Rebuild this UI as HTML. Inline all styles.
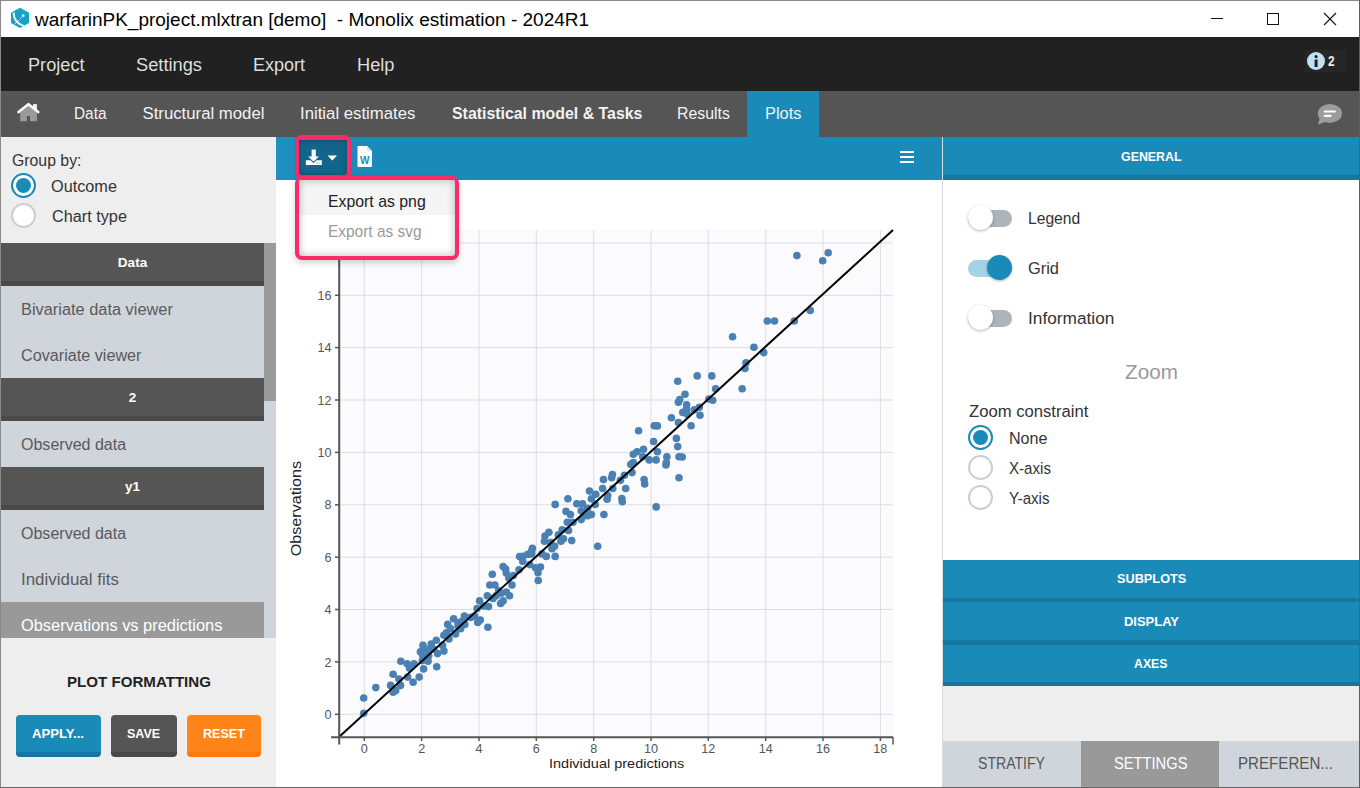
<!DOCTYPE html>
<html><head><meta charset="utf-8"><style>
html,body{margin:0;padding:0;width:1360px;height:788px;overflow:hidden;background:#eee}
body{position:relative;font-family:"Liberation Sans",sans-serif}
.r{position:absolute;box-sizing:content-box}
.t{position:absolute;white-space:nowrap}
</style></head><body>
<div class="r" style="left:0px;top:0px;width:1360px;height:788px;background:#eeeeee;"></div>
<div class="r" style="left:0px;top:0px;width:1360px;height:37px;background:#ffffff;"></div>
<div class="r" style="left:0px;top:0px;width:1360px;height:1px;background:#8a8a8a;"></div>
<div class="r" style="left:0px;top:0px;width:1px;height:788px;background:#8a8a8a;"></div>
<svg class="r" style="left:5px;top:3px" width="30" height="30"><polygon points="15,4.8 24,9.7 24,20 15,25.1 6,20 6,9.7" fill="#12a3c7"/><path d="M7.6,9.8 L9.6,9.6 Q9.4,19 19.6,22.6 L18.2,23.4 Q8.2,21 7.6,9.8 Z" fill="#fff"/><rect x="17" y="11.5" width="2.4" height="2.2" fill="#fff"/><path d="M10.2,20.8 L16.8,14.2" stroke="#fff" stroke-width="0.9" stroke-dasharray="1.2,0.9"/></svg>
<div class="t" style="left:35.30px;top:11.01px;font-size:18.58px;line-height:18.58px;color:#000;transform:scaleX(1.0221);transform-origin:left center;">warfarinPK_project.mlxtran [demo]&nbsp; - Monolix estimation - 2024R1</div>
<div class="r" style="left:1211px;top:18px;width:12px;height:1px;background:#111;"></div>
<div class="r" style="left:1267px;top:13px;width:10px;height:10px;border:1px solid #111"></div>
<svg class="r" style="left:1323px;top:12px" width="14" height="14"><path d="M1,1 L13,13 M13,1 L1,13" stroke="#111" stroke-width="1.1"/></svg>
<div class="r" style="left:1px;top:37px;width:1358px;height:54px;background:#212121;"></div>
<div class="t" style="left:27.50px;top:56.01px;font-size:18.58px;line-height:18.58px;color:#dedede;transform:scaleX(0.9773);transform-origin:left center;">Project</div>
<div class="t" style="left:135.50px;top:56.01px;font-size:18.58px;line-height:18.58px;color:#dedede;transform:scaleX(0.9833);transform-origin:left center;">Settings</div>
<div class="t" style="left:253.00px;top:56.01px;font-size:18.58px;line-height:18.58px;color:#dedede;transform:scaleX(0.9686);transform-origin:left center;">Export</div>
<div class="t" style="left:356.50px;top:56.01px;font-size:18.58px;line-height:18.58px;color:#dedede;transform:scaleX(0.9816);transform-origin:left center;">Help</div>
<div class="r" style="left:1305px;top:50px;width:41px;height:22px;background:#262626;"></div>
<svg class="r" style="left:1307px;top:52px" width="19" height="19"><circle cx="9" cy="9" r="9" fill="#bfe1f2"/><rect x="7.6" y="7.5" width="3" height="7.5" fill="#222"/><circle cx="9.1" cy="4.6" r="1.6" fill="#222"/></svg>
<div class="t" style="left:1327.60px;top:55.01px;font-size:13.97px;line-height:13.97px;color:#e8e8e8;font-weight:bold;transform:scaleX(0.8497);transform-origin:left center;">2</div>
<div class="r" style="left:1px;top:91px;width:1358px;height:46px;background:#555555;"></div>
<div class="r" style="left:747px;top:91px;width:72px;height:46px;background:#1a8bb9;"></div>
<svg class="r" style="left:10px;top:95px" width="40" height="35"><path d="M10.2,17.5 L18.4,10.8 L26.9,17.5 L26.9,26.2 L20,26.2 L20,21.1 L16.9,21.1 L16.9,26.2 L10.2,26.2 Z" fill="#9a9a9a"/><rect x="23.1" y="9.1" width="3.8" height="5" fill="#f4f4f4"/><path d="M8.6,17.1 L18.4,9.2 L28.2,17.1" stroke="#fff" stroke-width="2.6" fill="none" stroke-linecap="round" stroke-linejoin="round"/></svg>
<div class="t" style="left:73.50px;top:106.02px;font-size:16.76px;line-height:16.76px;color:#f2f2f2;transform:scaleX(0.9180);transform-origin:left center;">Data</div>
<div class="t" style="left:142.50px;top:106.02px;font-size:16.76px;line-height:16.76px;color:#f2f2f2;">Structural model</div>
<div class="t" style="left:300.00px;top:106.02px;font-size:16.76px;line-height:16.76px;color:#f2f2f2;">Initial estimates</div>
<div class="t" style="left:451.50px;top:106.02px;font-size:16.76px;line-height:16.76px;color:#f2f2f2;font-weight:bold;transform:scaleX(0.9483);transform-origin:left center;">Statistical model &amp; Tasks</div>
<div class="t" style="left:677.00px;top:106.02px;font-size:16.76px;line-height:16.76px;color:#f2f2f2;transform:scaleX(0.9484);transform-origin:left center;">Results</div>
<div class="t" style="left:765.00px;top:106.02px;font-size:16.76px;line-height:16.76px;color:#f2f2f2;transform:scaleX(0.9796);transform-origin:left center;">Plots</div>
<svg class="r" style="left:1300px;top:95px" width="60" height="40"><ellipse cx="29.9" cy="18.4" rx="12.1" ry="9.5" fill="#9c9c9c"/><path d="M20,22 L18,29.8 L27,26 Z" fill="#9c9c9c"/><rect x="23.6" y="15.4" width="12.4" height="2.2" rx="1" fill="#fff"/><rect x="23.6" y="19.7" width="8" height="2.2" rx="1" fill="#fff"/></svg>
<div class="r" style="left:1px;top:137px;width:275px;height:651px;background:#eeeeee;"></div>
<div class="t" style="left:11.50px;top:152.01px;font-size:16.48px;line-height:16.48px;color:#333;transform:scaleX(0.9604);transform-origin:left center;">Group by:</div>
<div class="r" style="left:11.0px;top:173.0px;width:20.8px;height:20.8px;border:2.1px solid #1a8bb9;border-radius:50%;background:#fff"></div><div class="r" style="left:16.0px;top:178.0px;width:15px;height:15px;border-radius:50%;background:#1a8bb9"></div>
<div class="t" style="left:51.40px;top:179.01px;font-size:15.78px;line-height:15.78px;color:#333;transform:scaleX(1.0308);transform-origin:left center;">Outcome</div>
<div class="r" style="left:11.0px;top:203.1px;width:21px;height:21px;border:2px solid #c9ced6;border-radius:50%;background:#fff"></div>
<div class="t" style="left:52.00px;top:209.01px;font-size:15.78px;line-height:15.78px;color:#333;transform:scaleX(1.0301);transform-origin:left center;">Chart type</div>
<div class="r" style="left:1px;top:243px;width:263px;height:395px;background:#d0d5dc;"></div>
<div class="r" style="left:264px;top:243px;width:12px;height:395px;background:#d0d5dc;"></div>
<div class="r" style="left:264px;top:243px;width:12px;height:158px;background:#9a9a9a;"></div>
<div class="r" style="left:1px;top:243px;width:263px;height:38px;background:#555555;"></div><div class="r" style="left:1px;top:281px;width:263px;height:5px;background:#4a4a4a;"></div><div class="t" style="left:117.82px;top:256.02px;font-size:13.55px;line-height:13.55px;color:#fff;font-weight:bold;">Data</div>
<div class="t" style="left:21.40px;top:302.02px;font-size:15.78px;line-height:15.78px;color:#5a5a5a;transform:scaleX(1.0376);transform-origin:left center;">Bivariate data viewer</div>
<div class="t" style="left:21.40px;top:348.02px;font-size:15.78px;line-height:15.78px;color:#5a5a5a;transform:scaleX(1.0261);transform-origin:left center;">Covariate viewer</div>
<div class="r" style="left:1px;top:378px;width:263px;height:38px;background:#555555;"></div><div class="r" style="left:1px;top:416px;width:263px;height:5px;background:#4a4a4a;"></div><div class="t" style="left:128.73px;top:391.02px;font-size:13.55px;line-height:13.55px;color:#fff;font-weight:bold;">2</div>
<div class="t" style="left:21.40px;top:437.02px;font-size:15.78px;line-height:15.78px;color:#5a5a5a;transform:scaleX(1.0162);transform-origin:left center;">Observed data</div>
<div class="r" style="left:1px;top:467px;width:263px;height:38px;background:#555555;"></div><div class="r" style="left:1px;top:505px;width:263px;height:5px;background:#4a4a4a;"></div><div class="t" style="left:124.97px;top:480.02px;font-size:13.55px;line-height:13.55px;color:#fff;font-weight:bold;">y1</div>
<div class="t" style="left:21.40px;top:526.02px;font-size:15.78px;line-height:15.78px;color:#5a5a5a;transform:scaleX(1.0162);transform-origin:left center;">Observed data</div>
<div class="t" style="left:21.40px;top:572.02px;font-size:15.78px;line-height:15.78px;color:#5a5a5a;transform:scaleX(1.0742);transform-origin:left center;">Individual fits</div>
<div class="r" style="left:1px;top:602px;width:263px;height:36px;background:#999999;"></div>
<div class="t" style="left:21.40px;top:618.02px;font-size:15.78px;line-height:15.78px;color:#fff;transform:scaleX(1.0399);transform-origin:left center;">Observations vs predictions</div>
<div class="t" style="left:66.60px;top:674.00px;font-size:15.36px;line-height:15.36px;color:#222;font-weight:bold;transform:scaleX(0.9829);transform-origin:left center;">PLOT FORMATTING</div>
<div class="r" style="left:16px;top:715px;width:85px;height:42px;border-radius:4px;background:linear-gradient(#1a8bb9 0,#1a8bb9 37px,#15779f 37px)"></div><div class="t" style="left:32.20px;top:727.01px;font-size:13.69px;line-height:13.69px;color:#fff;font-weight:bold;transform:scaleX(0.9564);transform-origin:left center;">APPLY...</div>
<div class="r" style="left:111px;top:715px;width:66px;height:42px;border-radius:4px;background:linear-gradient(#555555 0,#555555 37px,#484848 37px)"></div><div class="t" style="left:127.20px;top:727.01px;font-size:13.69px;line-height:13.69px;color:#fff;font-weight:bold;transform:scaleX(0.9129);transform-origin:left center;">SAVE</div>
<div class="r" style="left:187px;top:715px;width:74px;height:42px;border-radius:4px;background:linear-gradient(#ff851b 0,#ff851b 37px,#ff7a0a 37px)"></div><div class="t" style="left:203.00px;top:727.01px;font-size:13.69px;line-height:13.69px;color:#fff;font-weight:bold;transform:scaleX(0.9160);transform-origin:left center;">RESET</div>
<div class="r" style="left:942px;top:137px;width:1px;height:651px;background:#d6dbe1;"></div>
<div class="r" style="left:943px;top:180px;width:416px;height:561px;background:#ffffff;"></div>
<div class="r" style="left:943px;top:137px;width:416px;height:38px;background:#1a8bb9;"></div><div class="r" style="left:943px;top:175px;width:416px;height:5px;background:#15779f;"></div>
<div class="t" style="left:1120.70px;top:150.00px;font-size:13.27px;line-height:13.27px;color:#fff;font-weight:bold;transform:scaleX(0.9341);transform-origin:left center;">GENERAL</div>
<div class="r" style="left:968px;top:210.1px;width:44px;height:16.7px;border-radius:8.3px;background:#aeb4bb"></div><div class="r" style="left:967.9px;top:205.0px;width:25px;height:25px;border-radius:50%;background:#fff;box-shadow:0 1px 3px rgba(0,0,0,0.3)"></div>
<div class="t" style="left:1027.80px;top:211.01px;font-size:15.92px;line-height:15.92px;color:#333;transform:scaleX(0.9825);transform-origin:left center;">Legend</div>
<div class="r" style="left:968px;top:260.0px;width:44px;height:16.7px;border-radius:8.3px;background:#a3d3e6"></div><div class="r" style="left:987.2px;top:254.9px;width:25px;height:25px;border-radius:50%;background:#1a8bb9;box-shadow:0 1px 3px rgba(0,0,0,0.3)"></div>
<div class="t" style="left:1027.80px;top:261.00px;font-size:15.92px;line-height:15.92px;color:#333;transform:scaleX(1.0306);transform-origin:left center;">Grid</div>
<div class="r" style="left:968px;top:310.0px;width:44px;height:16.7px;border-radius:8.3px;background:#aeb4bb"></div><div class="r" style="left:967.9px;top:304.9px;width:25px;height:25px;border-radius:50%;background:#fff;box-shadow:0 1px 3px rgba(0,0,0,0.3)"></div>
<div class="t" style="left:1027.80px;top:311.00px;font-size:15.92px;line-height:15.92px;color:#333;transform:scaleX(1.0860);transform-origin:left center;">Information</div>
<div class="t" style="left:1124.50px;top:362.01px;font-size:20.53px;line-height:20.53px;color:#999;transform:scaleX(1.0080);transform-origin:left center;">Zoom</div>
<div class="t" style="left:968.50px;top:404.02px;font-size:15.92px;line-height:15.92px;color:#333;transform:scaleX(1.0468);transform-origin:left center;">Zoom constraint</div>
<div class="r" style="left:968.0px;top:425.4px;width:20.8px;height:20.8px;border:2.1px solid #1a8bb9;border-radius:50%;background:#fff"></div><div class="r" style="left:973.0px;top:430.4px;width:15px;height:15px;border-radius:50%;background:#1a8bb9"></div>
<div class="t" style="left:1008.60px;top:431.01px;font-size:15.92px;line-height:15.92px;color:#333;transform:scaleX(1.0114);transform-origin:left center;">None</div>
<div class="r" style="left:968.0px;top:455.2px;width:21px;height:21px;border:2px solid #c9ced6;border-radius:50%;background:#fff"></div>
<div class="t" style="left:1008.60px;top:461.01px;font-size:15.92px;line-height:15.92px;color:#333;transform:scaleX(0.9494);transform-origin:left center;">X-axis</div>
<div class="r" style="left:968.0px;top:485.0px;width:21px;height:21px;border:2px solid #c9ced6;border-radius:50%;background:#fff"></div>
<div class="t" style="left:1008.60px;top:491.02px;font-size:15.92px;line-height:15.92px;color:#333;transform:scaleX(0.9468);transform-origin:left center;">Y-axis</div>
<div class="r" style="left:943px;top:560px;width:416px;height:37.5px;background:#1a8bb9;"></div><div class="r" style="left:943px;top:597.5px;width:416px;height:4.0px;background:#15779f;"></div>
<div class="r" style="left:943px;top:601.5px;width:416px;height:38.5px;background:#1a8bb9;"></div><div class="r" style="left:943px;top:640.0px;width:416px;height:4.5px;background:#15779f;"></div>
<div class="r" style="left:943px;top:644.5px;width:416px;height:37.0px;background:#1a8bb9;"></div><div class="r" style="left:943px;top:681.5px;width:416px;height:5.0px;background:#15779f;"></div>
<div class="t" style="left:1116.50px;top:572.00px;font-size:13.27px;line-height:13.27px;color:#fff;font-weight:bold;transform:scaleX(0.9592);transform-origin:left center;">SUBPLOTS</div>
<div class="t" style="left:1123.90px;top:615.00px;font-size:13.27px;line-height:13.27px;color:#fff;font-weight:bold;transform:scaleX(0.9771);transform-origin:left center;">DISPLAY</div>
<div class="t" style="left:1134.20px;top:657.00px;font-size:13.27px;line-height:13.27px;color:#fff;font-weight:bold;transform:scaleX(0.9271);transform-origin:left center;">AXES</div>
<div class="r" style="left:943px;top:686px;width:416px;height:55px;background:#eeeeee;"></div>
<div class="r" style="left:943px;top:741px;width:138px;height:46px;background:#d0d5dc;"></div>
<div class="r" style="left:1081px;top:741px;width:138px;height:46px;background:#999999;"></div>
<div class="r" style="left:1219px;top:741px;width:140px;height:46px;background:#d0d5dc;"></div>
<div class="t" style="left:977.80px;top:756.02px;font-size:16.62px;line-height:16.62px;color:#555;transform:scaleX(0.8470);transform-origin:left center;">STRATIFY</div>
<div class="t" style="left:1114.00px;top:756.02px;font-size:16.62px;line-height:16.62px;color:#fff;transform:scaleX(0.8844);transform-origin:left center;">SETTINGS</div>
<div class="t" style="left:1237.50px;top:756.02px;font-size:16.62px;line-height:16.62px;color:#555;transform:scaleX(0.9103);transform-origin:left center;">PREFEREN...</div>
<div class="r" style="left:276px;top:137px;width:666px;height:43px;background:#1a8bb9;"></div>
<div class="r" style="left:276px;top:180px;width:666px;height:607px;background:#ffffff;"></div>
<svg class="r" style="left:0;top:0" width="1360" height="788"><rect x="340" y="230" width="553" height="507" fill="#fbfbfd"/><line x1="364.3" y1="230" x2="364.3" y2="737" stroke="#dcdde1" stroke-width="1"/><line x1="340" y1="714.3" x2="893" y2="714.3" stroke="#dcdde1" stroke-width="1"/><line x1="421.6" y1="230" x2="421.6" y2="737" stroke="#dcdde1" stroke-width="1"/><line x1="340" y1="661.9" x2="893" y2="661.9" stroke="#dcdde1" stroke-width="1"/><line x1="479.0" y1="230" x2="479.0" y2="737" stroke="#dcdde1" stroke-width="1"/><line x1="340" y1="609.5" x2="893" y2="609.5" stroke="#dcdde1" stroke-width="1"/><line x1="536.3" y1="230" x2="536.3" y2="737" stroke="#dcdde1" stroke-width="1"/><line x1="340" y1="557.2" x2="893" y2="557.2" stroke="#dcdde1" stroke-width="1"/><line x1="593.7" y1="230" x2="593.7" y2="737" stroke="#dcdde1" stroke-width="1"/><line x1="340" y1="504.8" x2="893" y2="504.8" stroke="#dcdde1" stroke-width="1"/><line x1="651.0" y1="230" x2="651.0" y2="737" stroke="#dcdde1" stroke-width="1"/><line x1="340" y1="452.4" x2="893" y2="452.4" stroke="#dcdde1" stroke-width="1"/><line x1="708.3" y1="230" x2="708.3" y2="737" stroke="#dcdde1" stroke-width="1"/><line x1="340" y1="400.0" x2="893" y2="400.0" stroke="#dcdde1" stroke-width="1"/><line x1="765.7" y1="230" x2="765.7" y2="737" stroke="#dcdde1" stroke-width="1"/><line x1="340" y1="347.6" x2="893" y2="347.6" stroke="#dcdde1" stroke-width="1"/><line x1="823.0" y1="230" x2="823.0" y2="737" stroke="#dcdde1" stroke-width="1"/><line x1="340" y1="295.3" x2="893" y2="295.3" stroke="#dcdde1" stroke-width="1"/><line x1="880.4" y1="230" x2="880.4" y2="737" stroke="#dcdde1" stroke-width="1"/><line x1="340" y1="242.9" x2="893" y2="242.9" stroke="#dcdde1" stroke-width="1"/><g fill="#4a80b2"><circle cx="363.7" cy="713.3" r="3.8"/><circle cx="363.7" cy="698.0" r="3.8"/><circle cx="375.8" cy="687.6" r="3.8"/><circle cx="390.6" cy="685.4" r="3.8"/><circle cx="393.1" cy="692.3" r="3.8"/><circle cx="395.7" cy="690.4" r="3.8"/><circle cx="393.1" cy="674.3" r="3.8"/><circle cx="398.9" cy="679.0" r="3.8"/><circle cx="400.5" cy="685.4" r="3.8"/><circle cx="407.7" cy="677.1" r="3.8"/><circle cx="413.1" cy="682.2" r="3.8"/><circle cx="419.2" cy="677.1" r="3.8"/><circle cx="400.8" cy="661.2" r="3.8"/><circle cx="407.1" cy="663.8" r="3.8"/><circle cx="409.6" cy="668.2" r="3.8"/><circle cx="414.1" cy="663.8" r="3.8"/><circle cx="423.6" cy="668.9" r="3.8"/><circle cx="436.7" cy="666.7" r="3.8"/><circle cx="428.0" cy="661.2" r="3.8"/><circle cx="422.3" cy="660.6" r="3.8"/><circle cx="420.4" cy="651.7" r="3.8"/><circle cx="423.0" cy="645.4" r="3.8"/><circle cx="423.6" cy="650.5" r="3.8"/><circle cx="426.1" cy="653.0" r="3.8"/><circle cx="431.2" cy="644.1" r="3.8"/><circle cx="436.3" cy="640.3" r="3.8"/><circle cx="437.6" cy="653.6" r="3.8"/><circle cx="433.8" cy="649.2" r="3.8"/><circle cx="443.9" cy="651.1" r="3.8"/><circle cx="442.6" cy="645.4" r="3.8"/><circle cx="443.9" cy="635.2" r="3.8"/><circle cx="447.7" cy="624.4" r="3.8"/><circle cx="446.4" cy="632.7" r="3.8"/><circle cx="449.0" cy="639.0" r="3.8"/><circle cx="428.7" cy="655.5" r="3.8"/><circle cx="487.9" cy="627.3" r="3.8"/><circle cx="480.3" cy="620.0" r="3.8"/><circle cx="477.7" cy="622.5" r="3.8"/><circle cx="474.6" cy="616.1" r="3.8"/><circle cx="470.8" cy="617.4" r="3.8"/><circle cx="464.4" cy="616.1" r="3.8"/><circle cx="461.9" cy="621.2" r="3.8"/><circle cx="458.1" cy="626.3" r="3.8"/><circle cx="453.6" cy="618.7" r="3.8"/><circle cx="450.5" cy="628.8" r="3.8"/><circle cx="455.5" cy="633.9" r="3.8"/><circle cx="460.6" cy="628.8" r="3.8"/><circle cx="447.9" cy="636.4" r="3.8"/><circle cx="477.1" cy="608.5" r="3.8"/><circle cx="479.6" cy="600.9" r="3.8"/><circle cx="488.5" cy="606.6" r="3.8"/><circle cx="487.3" cy="595.8" r="3.8"/><circle cx="493.0" cy="598.4" r="3.8"/><circle cx="489.8" cy="585.0" r="3.8"/><circle cx="494.9" cy="585.0" r="3.8"/><circle cx="498.7" cy="590.8" r="3.8"/><circle cx="492.3" cy="574.3" r="3.8"/><circle cx="503.1" cy="566.6" r="3.8"/><circle cx="506.3" cy="573.0" r="3.8"/><circle cx="508.8" cy="578.1" r="3.8"/><circle cx="513.3" cy="575.5" r="3.8"/><circle cx="512.0" cy="585.0" r="3.8"/><circle cx="501.2" cy="593.3" r="3.8"/><circle cx="506.3" cy="592.0" r="3.8"/><circle cx="509.5" cy="595.8" r="3.8"/><circle cx="503.1" cy="600.9" r="3.8"/><circle cx="500.6" cy="603.5" r="3.8"/><circle cx="519.0" cy="569.8" r="3.8"/><circle cx="519.6" cy="556.5" r="3.8"/><circle cx="496.1" cy="595.8" r="3.8"/><circle cx="483.5" cy="606.0" r="3.8"/><circle cx="597.7" cy="546.3" r="3.8"/><circle cx="571.7" cy="540.6" r="3.8"/><circle cx="555.2" cy="556.4" r="3.8"/><circle cx="546.3" cy="556.4" r="3.8"/><circle cx="541.9" cy="553.9" r="3.8"/><circle cx="532.4" cy="548.2" r="3.8"/><circle cx="522.8" cy="556.4" r="3.8"/><circle cx="531.7" cy="553.9" r="3.8"/><circle cx="548.9" cy="532.3" r="3.8"/><circle cx="545.0" cy="536.1" r="3.8"/><circle cx="544.4" cy="541.2" r="3.8"/><circle cx="550.8" cy="542.5" r="3.8"/><circle cx="554.6" cy="546.3" r="3.8"/><circle cx="560.9" cy="541.2" r="3.8"/><circle cx="558.4" cy="534.9" r="3.8"/><circle cx="562.2" cy="529.8" r="3.8"/><circle cx="568.5" cy="530.4" r="3.8"/><circle cx="567.3" cy="522.2" r="3.8"/><circle cx="573.0" cy="522.2" r="3.8"/><circle cx="566.0" cy="511.4" r="3.8"/><circle cx="570.4" cy="514.6" r="3.8"/><circle cx="555.2" cy="504.4" r="3.8"/><circle cx="567.9" cy="498.7" r="3.8"/><circle cx="576.8" cy="503.8" r="3.8"/><circle cx="582.5" cy="503.8" r="3.8"/><circle cx="581.2" cy="510.8" r="3.8"/><circle cx="583.8" cy="515.8" r="3.8"/><circle cx="581.2" cy="519.6" r="3.8"/><circle cx="587.6" cy="515.8" r="3.8"/><circle cx="591.4" cy="514.6" r="3.8"/><circle cx="589.5" cy="491.1" r="3.8"/><circle cx="591.4" cy="498.7" r="3.8"/><circle cx="595.8" cy="494.3" r="3.8"/><circle cx="595.2" cy="504.4" r="3.8"/><circle cx="587.6" cy="508.2" r="3.8"/><circle cx="552.0" cy="548.8" r="3.8"/><circle cx="563.5" cy="538.7" r="3.8"/><circle cx="638.6" cy="430.8" r="3.8"/><circle cx="654.2" cy="425.7" r="3.8"/><circle cx="657.4" cy="425.9" r="3.8"/><circle cx="671.4" cy="417.8" r="3.8"/><circle cx="677.7" cy="381.3" r="3.8"/><circle cx="678.4" cy="402.2" r="3.8"/><circle cx="678.4" cy="422.5" r="3.8"/><circle cx="653.6" cy="441.5" r="3.8"/><circle cx="643.5" cy="449.2" r="3.8"/><circle cx="637.1" cy="451.7" r="3.8"/><circle cx="633.3" cy="454.2" r="3.8"/><circle cx="642.8" cy="456.8" r="3.8"/><circle cx="649.2" cy="459.9" r="3.8"/><circle cx="656.1" cy="459.9" r="3.8"/><circle cx="657.4" cy="451.7" r="3.8"/><circle cx="666.9" cy="456.8" r="3.8"/><circle cx="666.3" cy="462.5" r="3.8"/><circle cx="676.4" cy="438.4" r="3.8"/><circle cx="677.7" cy="446.6" r="3.8"/><circle cx="679.0" cy="456.8" r="3.8"/><circle cx="633.3" cy="462.5" r="3.8"/><circle cx="632.0" cy="472.6" r="3.8"/><circle cx="624.4" cy="475.2" r="3.8"/><circle cx="612.4" cy="474.5" r="3.8"/><circle cx="603.5" cy="479.6" r="3.8"/><circle cx="644.1" cy="479.6" r="3.8"/><circle cx="679.0" cy="477.7" r="3.8"/><circle cx="630.8" cy="464.4" r="3.8"/><circle cx="611.7" cy="477.7" r="3.8"/><circle cx="656.2" cy="506.9" r="3.8"/><circle cx="644.7" cy="484.0" r="3.8"/><circle cx="625.7" cy="488.5" r="3.8"/><circle cx="621.9" cy="498.6" r="3.8"/><circle cx="622.3" cy="501.8" r="3.8"/><circle cx="620.4" cy="480.2" r="3.8"/><circle cx="602.6" cy="488.5" r="3.8"/><circle cx="612.8" cy="488.5" r="3.8"/><circle cx="607.7" cy="495.5" r="3.8"/><circle cx="607.1" cy="499.3" r="3.8"/><circle cx="603.9" cy="514.5" r="3.8"/><circle cx="666.0" cy="465.0" r="3.8"/><circle cx="732.6" cy="336.8" r="3.8"/><circle cx="753.9" cy="347.2" r="3.8"/><circle cx="746.0" cy="362.8" r="3.8"/><circle cx="745.0" cy="368.5" r="3.8"/><circle cx="742.2" cy="388.8" r="3.8"/><circle cx="715.6" cy="388.8" r="3.8"/><circle cx="711.8" cy="375.9" r="3.8"/><circle cx="697.2" cy="375.9" r="3.8"/><circle cx="685.0" cy="394.2" r="3.8"/><circle cx="679.7" cy="399.6" r="3.8"/><circle cx="708.9" cy="399.0" r="3.8"/><circle cx="712.7" cy="400.3" r="3.8"/><circle cx="686.6" cy="404.7" r="3.8"/><circle cx="699.3" cy="407.3" r="3.8"/><circle cx="694.3" cy="409.8" r="3.8"/><circle cx="682.8" cy="412.4" r="3.8"/><circle cx="687.3" cy="414.3" r="3.8"/><circle cx="700.0" cy="415.3" r="3.8"/><circle cx="691.1" cy="425.7" r="3.8"/><circle cx="682.2" cy="457.0" r="3.8"/><circle cx="686.6" cy="409.2" r="3.8"/><circle cx="796.9" cy="255.6" r="3.8"/><circle cx="828.2" cy="252.7" r="3.8"/><circle cx="822.7" cy="260.7" r="3.8"/><circle cx="767.3" cy="321.0" r="3.8"/><circle cx="774.5" cy="321.0" r="3.8"/><circle cx="794.3" cy="321.0" r="3.8"/><circle cx="810.2" cy="310.4" r="3.8"/><circle cx="763.7" cy="352.6" r="3.8"/><circle cx="540.5" cy="567.1" r="3.8"/><circle cx="535.5" cy="567.8" r="3.8"/><circle cx="538.0" cy="572.8" r="3.8"/><circle cx="538.2" cy="580.5" r="3.8"/><circle cx="529.7" cy="564.6" r="3.8"/><circle cx="522.8" cy="561.4" r="3.8"/><circle cx="527.8" cy="554.4" r="3.8"/><circle cx="531.6" cy="551.3" r="3.8"/><circle cx="505.6" cy="569.0" r="3.8"/><circle cx="422.6" cy="654.8" r="3.8"/><circle cx="464.8" cy="624.4" r="3.8"/><circle cx="458.0" cy="622.8" r="3.8"/><circle cx="429.8" cy="648.7" r="3.8"/><circle cx="427.5" cy="658.6" r="3.8"/></g><line x1="339" y1="737" x2="893" y2="230" stroke="#000" stroke-width="2"/><line x1="339.2" y1="225" x2="339.2" y2="744.5" stroke="#555" stroke-width="2"/><line x1="331" y1="737.3" x2="893" y2="737.3" stroke="#555" stroke-width="2"/><line x1="893" y1="737" x2="893" y2="744.5" stroke="#555" stroke-width="1.5"/><line x1="364.3" y1="737" x2="364.3" y2="741" stroke="#555" stroke-width="1.5"/><line x1="335" y1="714.3" x2="339" y2="714.3" stroke="#555" stroke-width="1.5"/><line x1="421.6" y1="737" x2="421.6" y2="741" stroke="#555" stroke-width="1.5"/><line x1="335" y1="661.9" x2="339" y2="661.9" stroke="#555" stroke-width="1.5"/><line x1="479.0" y1="737" x2="479.0" y2="741" stroke="#555" stroke-width="1.5"/><line x1="335" y1="609.5" x2="339" y2="609.5" stroke="#555" stroke-width="1.5"/><line x1="536.3" y1="737" x2="536.3" y2="741" stroke="#555" stroke-width="1.5"/><line x1="335" y1="557.2" x2="339" y2="557.2" stroke="#555" stroke-width="1.5"/><line x1="593.7" y1="737" x2="593.7" y2="741" stroke="#555" stroke-width="1.5"/><line x1="335" y1="504.8" x2="339" y2="504.8" stroke="#555" stroke-width="1.5"/><line x1="651.0" y1="737" x2="651.0" y2="741" stroke="#555" stroke-width="1.5"/><line x1="335" y1="452.4" x2="339" y2="452.4" stroke="#555" stroke-width="1.5"/><line x1="708.3" y1="737" x2="708.3" y2="741" stroke="#555" stroke-width="1.5"/><line x1="335" y1="400.0" x2="339" y2="400.0" stroke="#555" stroke-width="1.5"/><line x1="765.7" y1="737" x2="765.7" y2="741" stroke="#555" stroke-width="1.5"/><line x1="335" y1="347.6" x2="339" y2="347.6" stroke="#555" stroke-width="1.5"/><line x1="823.0" y1="737" x2="823.0" y2="741" stroke="#555" stroke-width="1.5"/><line x1="335" y1="295.3" x2="339" y2="295.3" stroke="#555" stroke-width="1.5"/><line x1="880.4" y1="737" x2="880.4" y2="741" stroke="#555" stroke-width="1.5"/><line x1="335" y1="242.9" x2="339" y2="242.9" stroke="#555" stroke-width="1.5"/></svg>
<div class="t" style="left:360.80px;top:743.01px;font-size:12.60px;line-height:12.60px;color:#555;">0</div>
<div class="t" style="left:418.14px;top:743.01px;font-size:12.60px;line-height:12.60px;color:#555;">2</div>
<div class="t" style="left:475.48px;top:743.01px;font-size:12.60px;line-height:12.60px;color:#555;">4</div>
<div class="t" style="left:532.82px;top:743.01px;font-size:12.60px;line-height:12.60px;color:#555;">6</div>
<div class="t" style="left:590.16px;top:743.01px;font-size:12.60px;line-height:12.60px;color:#555;">8</div>
<div class="t" style="left:643.99px;top:743.01px;font-size:12.60px;line-height:12.60px;color:#555;">10</div>
<div class="t" style="left:701.33px;top:743.01px;font-size:12.60px;line-height:12.60px;color:#555;">12</div>
<div class="t" style="left:758.67px;top:743.01px;font-size:12.60px;line-height:12.60px;color:#555;">14</div>
<div class="t" style="left:816.01px;top:743.01px;font-size:12.60px;line-height:12.60px;color:#555;">16</div>
<div class="t" style="left:873.35px;top:743.01px;font-size:12.60px;line-height:12.60px;color:#555;">18</div>
<div class="t" style="left:324.49px;top:709.02px;font-size:12.60px;line-height:12.60px;color:#555;">0</div>
<div class="t" style="left:324.49px;top:657.01px;font-size:12.60px;line-height:12.60px;color:#555;">2</div>
<div class="t" style="left:324.49px;top:604.01px;font-size:12.60px;line-height:12.60px;color:#555;">4</div>
<div class="t" style="left:324.49px;top:552.02px;font-size:12.60px;line-height:12.60px;color:#555;">6</div>
<div class="t" style="left:324.49px;top:499.01px;font-size:12.60px;line-height:12.60px;color:#555;">8</div>
<div class="t" style="left:317.48px;top:447.01px;font-size:12.60px;line-height:12.60px;color:#555;">10</div>
<div class="t" style="left:317.48px;top:395.02px;font-size:12.60px;line-height:12.60px;color:#555;">12</div>
<div class="t" style="left:317.48px;top:342.01px;font-size:12.60px;line-height:12.60px;color:#555;">14</div>
<div class="t" style="left:317.48px;top:290.01px;font-size:12.60px;line-height:12.60px;color:#555;">16</div>
<div class="t" style="left:548.50px;top:757.01px;font-size:13.41px;line-height:13.41px;color:#222;transform:scaleX(1.0801);transform-origin:left center;">Individual predictions</div>
<div class="t" style="left:250.62px;top:500.65px;width:89.55px;height:15.2px;font-size:15.2px;line-height:15.2px;color:#222;transform:rotate(-90deg) scaleX(1.0664);transform-origin:50% 50%">Observations</div>
<div class="r" style="left:276px;top:137px;width:18px;height:43px;background:#1e8fbe;"></div>
<div class="r" style="left:298px;top:140px;width:50px;height:36px;background:#12668b;box-shadow:inset 0 0 6px rgba(0,0,0,0.35)"></div>
<svg class="r" style="left:300px;top:142px" width="40" height="28"><rect x="11.6" y="7.6" width="4.2" height="8" fill="#fff"/><path d="M8.2,14.6 L19,14.6 L13.6,19.8 Z" fill="#fff"/><path d="M5.9,18.3 L10.6,18.3 L13.6,21.2 L16.6,18.3 L21.8,18.3 L21.8,22.9 L5.9,22.9 Z" fill="#fff"/><rect x="16.5" y="20.6" width="3" height="1" fill="#9bb"/></svg>
<svg class="r" style="left:327px;top:154.6px" width="11" height="6"><path d="M0.5,0.5 L10,0.5 L5.25,5.5 Z" fill="#fff"/></svg>
<svg class="r" style="left:356px;top:145px" width="17" height="23" viewBox="0 0 17 23"><path d="M1.5,1 L11,1 L16,6 L16,21 Q16,22 15,22 L2.5,22 Q1.5,22 1.5,21 Z" fill="#fff"/><path d="M11,1 L11,6 L16,6" fill="#cfe8f3"/><text x="8.7" y="18.5" font-family="Liberation Sans" font-weight="bold" font-size="10" fill="#1a8bb9" text-anchor="middle">W</text></svg>
<div class="r" style="left:900px;top:151px;width:14px;height:2px;background:#fff;"></div><div class="r" style="left:900px;top:156px;width:14px;height:2px;background:#fff;"></div><div class="r" style="left:900px;top:161px;width:14px;height:2px;background:#fff;"></div>
<div class="r" style="left:294.5px;top:135.3px;width:48px;height:36px;border:4.5px solid #fb2a69;border-radius:7px"></div>
<div class="r" style="left:294.5px;top:176.2px;width:156px;height:76px;border:4.5px solid #fb2a69;border-radius:7px;background:#fff;overflow:hidden;box-shadow:0 3px 6px rgba(0,0,0,0.18)"><div style="position:absolute;left:0;top:0;width:156px;height:35.3px;background:#f5f5f5"></div><div style="position:absolute;left:0;top:0;width:156px;height:76px;box-shadow:inset 0 0 8px rgba(0,0,0,0.28)"></div></div>
<div class="t" style="left:328.30px;top:193.00px;font-size:16.20px;line-height:16.20px;color:#222;transform:scaleX(0.9783);transform-origin:left center;">Export as png</div>
<div class="t" style="left:328.30px;top:223.00px;font-size:16.20px;line-height:16.20px;color:#999;transform:scaleX(0.9536);transform-origin:left center;">Export as svg</div>
<div class="r" style="left:1359px;top:0px;width:1px;height:788px;background:#5e5e5e;"></div>
<div class="r" style="left:0px;top:787px;width:1360px;height:1px;background:#666666;"></div>
</body></html>
